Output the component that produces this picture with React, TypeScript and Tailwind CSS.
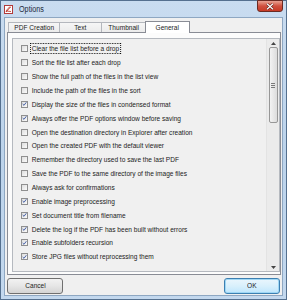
import React from 'react'

const options = [
  { label: 'Clear the file list before a drop', checked: false },
  { label: 'Sort the file list after each drop', checked: false },
  { label: 'Show the full path of the files in the list view', checked: false },
  { label: 'Include the path of the files in the sort', checked: false },
  { label: 'Display the size of the files in condensed format', checked: true },
  { label: 'Always offer the PDF options window before saving', checked: true },
  { label: 'Open the destination directory in Explorer after creation', checked: false },
  { label: 'Open the created PDF with the default viewer', checked: false },
  { label: 'Remember the directory used to save the last PDF', checked: false },
  { label: 'Save the PDF to the same directory of the image files', checked: false },
  { label: 'Always ask for confirmations', checked: false },
  { label: 'Enable image preprocessing', checked: true },
  { label: 'Set document title from filename', checked: true },
  { label: 'Delete the log if the PDF has been built without errors', checked: true },
  { label: 'Enable subfolders recursion', checked: true },
  { label: 'Store JPG files without reprocessing them', checked: true },
]

const tabs = [
  { name: 'PDF Creation', w: 'w-[51px]' },
  { name: 'Text', w: 'w-[42px]' },
  { name: 'Thumbnail', w: 'w-[44px]' },
]

function CheckBox({ checked }: { checked: boolean }) {
  return (
    <div className="w-[7px] h-[7px] border border-[#8f8f8f] bg-gradient-to-br from-[#dedede] to-[#fbfbfb] flex items-center justify-center shrink-0">
      {checked && (
        <svg width="6" height="6" viewBox="0 0 6 6">
          <path d="M0.8 3 L2.4 4.6 L5.2 0.9" fill="none" stroke="#3753a0" strokeWidth="1.1" />
        </svg>
      )}
    </div>
  )
}

function Narrow({ children, className = '' }: { children: React.ReactNode; className?: string }) {
  return <span className={`inline-block origin-left scale-x-[0.82] whitespace-nowrap ${className}`}>{children}</span>
}

export default function App() {
  return (
    <div className="w-[287px] h-[300px] flex flex-col bg-gradient-to-b from-[#c9dcf0] via-[#bcd3eb] to-[#c3d8ee] border border-[#55708f] font-['Liberation_Sans',sans-serif] text-[8px] text-[#222]">
      {/* Title bar */}
      <div className="h-[16px] flex items-center relative shrink-0">
        <svg width="9" height="9" viewBox="0 0 9 9" className="ml-[3px]">
          <rect x="0.5" y="0.5" width="8" height="8" fill="#fff" stroke="#b23a3a" />
          <path d="M2 7 C3 4 5 2 6.5 2 C5 4 4 5 2 7 Z M2.5 6 L7 6.5" fill="none" stroke="#c0392b" strokeWidth="0.9" />
        </svg>
        <span className="ml-[6px] text-[8.5px] text-[#1e2b3c] inline-block origin-left scale-x-[0.85]">Options</span>
        <div className="absolute right-[3px] top-[-1px] w-[26px] h-[12px] rounded-b-[3px] border border-[#6b2a22] bg-gradient-to-b from-[#e8a293] via-[#d0503f] to-[#c73a25] flex items-center justify-center">
          <svg width="8" height="7" viewBox="0 0 8 7">
            <path d="M1 0.8 L7 6.2 M7 0.8 L1 6.2" stroke="#5a1a12" strokeWidth="2.4" />
            <path d="M1 0.8 L7 6.2 M7 0.8 L1 6.2" stroke="#fff" strokeWidth="1.3" />
          </svg>
        </div>
      </div>

      {/* Client area */}
      <div className="flex-1 mx-[3px] mb-[3px] border border-[#8ea7c2] bg-[#f0f0f0] flex flex-col pl-[2px] pr-[1px]">
        {/* Tabs */}
        <div className="h-[13px] mt-[1px] flex items-end shrink-0 pl-[1px]">
          {tabs.map((t) => (
            <div
              key={t.name}
              className={`h-[10px] border-t border-l border-[#b4b7bd] bg-gradient-to-b from-[#f6f6f6] to-[#ececec] flex items-center justify-center ${t.w}`}
            >
              <span className="inline-block scale-x-[0.82] whitespace-nowrap">{t.name}</span>
            </div>
          ))}
          <div className="w-[45px] h-[12px] border border-b-0 border-[#898c95] bg-white flex items-center justify-center -mb-px relative z-10">
            <span className="inline-block scale-x-[0.82]">General</span>
          </div>
        </div>

        {/* Panel */}
        <div className="h-[243px] border border-[#898c95] bg-[#fcfcfc] flex flex-col pl-[4px] pt-[5px] pb-[2px] shrink-0">
          <div className="flex-1 border border-[#b5b9bf] bg-[#f0f0f0] flex min-h-0">
            <div className="flex-1 pt-[3px] pl-[8px] overflow-hidden">
              {options.map((o, i) => (
                <div key={o.label} className="h-[13.87px] flex items-center">
                  <CheckBox checked={o.checked} />
                  <Narrow
                    className={`ml-[2px] px-[1px] leading-[9px] ${i === 0 ? 'border border-dotted border-black' : 'border border-transparent'}`}
                  >
                    {o.label}
                  </Narrow>
                </div>
              ))}
            </div>

            {/* Scrollbar */}
            <div className="w-[13px] border-l border-[#e3e3e3] bg-[#ebebeb] flex flex-col items-center shrink-0">
              <div className="h-[8px] flex items-center justify-center">
                <svg width="5" height="3" viewBox="0 0 5 3">
                  <path d="M0 3 L2.5 0 L5 3 Z" fill="#444" />
                </svg>
              </div>
              <div className="w-[9px] h-[76px] rounded-[2px] border border-[#979797] bg-gradient-to-r from-[#f3f3f3] to-[#dcdcdc] flex items-center justify-center">
                <div className="flex flex-col gap-[1px]">
                  <div className="w-[4px] h-px bg-[#7a7a7a]" />
                  <div className="w-[4px] h-px bg-[#7a7a7a]" />
                  <div className="w-[4px] h-px bg-[#7a7a7a]" />
                </div>
              </div>
              <div className="flex-1" />
              <div className="h-[8px] flex items-center justify-center">
                <svg width="5" height="3" viewBox="0 0 5 3">
                  <path d="M0 0 L2.5 3 L5 0 Z" fill="#444" />
                </svg>
              </div>
            </div>
          </div>
        </div>

        {/* Buttons */}
        <div className="flex justify-between items-center mt-[3px] pr-[1px]">
          <button className="w-[56px] h-[16px] rounded-[3px] border border-[#707070] bg-gradient-to-b from-[#f2f2f2] via-[#e6e6e6] to-[#d4d4d4] flex items-center justify-center text-[8px]">
            <span className="inline-block scale-x-[0.82]">Cancel</span>
          </button>
          <button className="w-[56px] h-[16px] rounded-[3px] border border-[#3c7fb1] bg-gradient-to-b from-[#eaf6fd] via-[#d9f0fc] to-[#bee6fd] shadow-[inset_0_0_0_1px_#9fd7f5] flex items-center justify-center text-[8px]">
            <span className="inline-block scale-x-[0.82]">OK</span>
          </button>
        </div>
      </div>
    </div>
  )
}
